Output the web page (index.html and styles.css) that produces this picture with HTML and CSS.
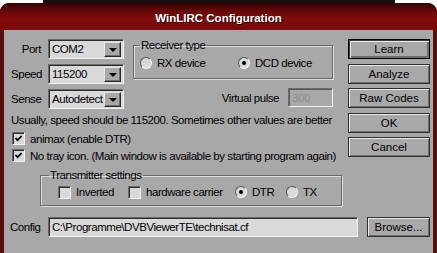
FILE: index.html
```html
<!DOCTYPE html>
<html>
<head>
	<meta charset="utf-8">
	<title>WinLIRC Configuration</title>
	<link rel="stylesheet" href="styles.css">
</head>
<body>
	<div class="top_strip"></div>
	<div class="window">
		<div class="title_bar">WinLIRC Configuration</div>
		<div class="client">
			<div class="upper">
				<div class="main">
					<div class="row_top">
						<div class="ports">
							<label>Port</label>
							<div class="combo"><span class="combo_text">COM2</span><span class="combo_btn"><i></i></span></div>
							<label>Speed</label>
							<div class="combo"><span class="combo_text">115200</span><span class="combo_btn"><i></i></span></div>
							<label>Sense</label>
							<div class="combo"><span class="combo_text">Autodetect</span><span class="combo_btn"><i></i></span></div>
						</div>
						<div class="receiver_col">
							<fieldset class="group receiver">
								<legend>Receiver type</legend>
								<div class="opt_row">
									<span class="opt rx"><span class="radio"></span>RX device</span>
									<span class="opt"><span class="radio on"></span>DCD device</span>
								</div>
							</fieldset>
							<div class="pulse_row">
								<span>Virtual pulse</span>
								<span class="edit disabled">300</span>
							</div>
						</div>
					</div>
					<p class="hint">Usually, speed should be 115200. Sometimes other values are better</p>
					<div class="check_row first">
						<span class="check on"><svg viewBox="0 0 9 9"><path d="M1.5 4 L3.6 6.2 L7.6 2"/></svg></span>animax (enable DTR)
					</div>
					<div class="check_row">
						<span class="check on"><svg viewBox="0 0 9 9"><path d="M1.5 4 L3.6 6.2 L7.6 2"/></svg></span>No tray icon. (Main window is available by starting program again)
					</div>
					<fieldset class="group transmitter">
						<legend>Transmitter settings</legend>
						<div class="opt_row">
							<span class="opt inv"><span class="check"></span>Inverted</span>
							<span class="opt hw"><span class="check"></span>hardware carrier</span>
							<span class="opt dtr"><span class="radio on"></span>DTR</span>
							<span class="opt"><span class="radio"></span>TX</span>
						</div>
					</fieldset>
				</div>
				<div class="buttons">
					<button class="btn default">Learn</button>
					<button class="btn">Analyze</button>
					<button class="btn">Raw Codes</button>
					<button class="btn">OK</button>
					<button class="btn">Cancel</button>
				</div>
			</div>
			<div class="config_row">
				<label>Config</label>
				<span class="edit path">C:\Programme\DVBViewerTE\technisat.cf</span>
				<button class="btn browse">Browse...</button>
			</div>
		</div>
	</div>
</body>
</html>
```

FILE: styles.css
```css
*{box-sizing: border-box;}
body{margin: 0; width: 437px; height: 253px; overflow: hidden; background: #fff;
	font: 11.5px/14px "Liberation Sans", Arial, sans-serif; letter-spacing: -0.45px; color: #000;}
.top_strip{height: 3px; margin: 0 42px 0 43px; background: #141010;}
/*窗口*/
.window{height: 250px; background: #5a0d0d; border-radius: 9px 9px 0 0;
	display: flex; flex-direction: column; overflow: hidden;}
.title_bar{height: 27px; line-height: 30px; text-align: center; color: #fff; font-weight: bold; letter-spacing: 0;
	text-shadow: 1px 1px 0 #2a0000;
	background: linear-gradient(#320202 0, #5e0707 25%, #800c0c 55%, #7c0a0a 100%);}
.client{flex: 1; margin: 0 4px; background: #a8a8a8; padding: 9px 3px 0 7px;}
.upper{display: flex; gap: 6px;}
.main{width: 331px;}
.buttons{width: 82px; display: flex; flex-direction: column; gap: 4.5px;}

/*左上*/
.row_top{display: flex;}
.ports{display: grid; grid-template-columns: 30px 76px; grid-auto-rows: 20px;
	column-gap: 7px; row-gap: 5px;}
.ports label{text-align: right; line-height: 20px;}
.combo{display: flex; background: #d9d9d9; border: 1px solid; border-color: #6a6a6a #f2f2f2 #f2f2f2 #6a6a6a;
	box-shadow: inset 1px 1px #2c2c2c; padding: 2px 2px 1px 2px; overflow: hidden;}
.combo_text{flex: 1; line-height: 15px; padding-left: 1px; white-space: nowrap; overflow: hidden;}
.combo_btn{width: 17px; flex: none; background: #a8a8a8; border: 1px solid; border-color: #e6e6e6 #2a2a2a #2a2a2a #e6e6e6;
	box-shadow: inset -1px -1px #6e6e6e; display: flex; align-items: center; justify-content: center;}
.combo_btn i{width: 0; height: 0; border-left: 4px solid transparent; border-right: 4px solid transparent;
	border-top: 4px solid #000;}

/*分组框*/
.group{margin: 0; border: 1px solid #6b6b6b; box-shadow: inset 1px 1px #dedede, 1px 1px #dedede;}
.group legend{padding: 0 1px; line-height: 14px;}
.receiver_col{margin-left: 9px; width: 200px;}
.receiver{margin-top: -1px; padding: 1px 6px 5px;}
.opt_row{display: flex; align-items: center; height: 20px;}
.opt{display: flex; align-items: center; gap: 5px; white-space: nowrap;}
.opt.rx{width: 98px;}
.radio{width: 12px; height: 12px; border-radius: 50%; background: #d9d9d9; border: 1px solid;
	border-color: #555 #f4f4f4 #f4f4f4 #555; flex: none; display: flex; align-items: center; justify-content: center;}
.radio.on::after{content: ""; width: 4px; height: 4px; border-radius: 50%; background: #000;}
.check{width: 13px; height: 13px; flex: none; background: #d9d9d9; border: 1px solid;
	border-color: #6a6a6a #f4f4f4 #f4f4f4 #6a6a6a; box-shadow: inset 1px 1px #2c2c2c; padding: 1px 0 0 1px;}
.check svg{display: block; width: 9px; height: 9px; fill: none; stroke: #000; stroke-width: 1.8;}
.pulse_row{display: flex; justify-content: flex-end; align-items: center; gap: 9px; margin-top: 9px;}
.edit{height: 20px; background: #d9d9d9; border: 1px solid; border-color: #6a6a6a #f2f2f2 #f2f2f2 #6a6a6a;
	box-shadow: inset 1px 1px #2c2c2c; padding-left: 3px; line-height: 18px; white-space: nowrap;}
.edit.disabled{width: 45px; height: 19px; background: #a8a8a8; color: #8c8c8c; box-shadow: inset 1px 1px #5a5a5a;}

/*说明和复选框*/
.hint{margin: 4px 0 0; white-space: nowrap;}
.check_row{display: flex; align-items: center; gap: 5px; height: 17px; padding-left: 1px; white-space: nowrap;}
.check_row.first{margin-top: 3px;}
.transmitter{margin: 4px 0 0 29px; width: 302px; padding: 1px 8px 4px;}
.transmitter .opt_row{height: 18px; padding-left: 9px;}
.opt.inv{width: 70px;}
.opt.hw{width: 107px;}
.opt.dtr{width: 51px;}

/*按钮*/
.btn{height: 20px; margin: 0; padding: 0; font: inherit; color: #000; background: #a8a8a8;
	border: 1px solid #2e2e2e; box-shadow: inset 1px 1px #ececec, inset -1px -1px #6e6e6e;}
.btn.default{border-color: #000; box-shadow: inset 1px 1px #3a3a3a, inset 2px 2px #ececec, inset -2px -2px #6e6e6e;}

/*配置*/
.config_row{display: flex; align-items: center; margin-top: 11px;}
.config_row label{width: 38px; margin-left: -1px;}
.edit.path{width: 310px;}
.btn.browse{width: 63px; margin-left: 9px;}
```
